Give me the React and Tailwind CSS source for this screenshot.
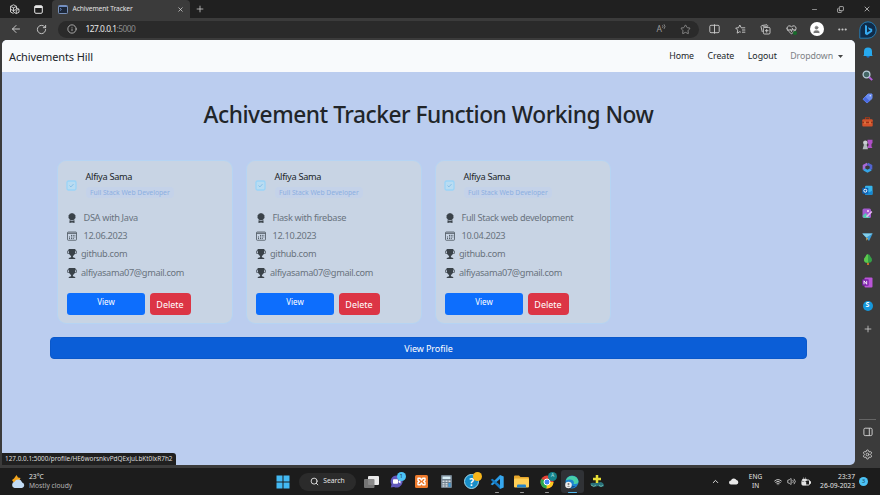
import React from 'react';
import { BsAwardFill, BsTrophyFill } from 'react-icons/bs';
import { ArrowLeft, RotateCw, Info, Star, X, Plus, Minus, Search, Settings, Wifi, Volume2, ChevronUp, Ellipsis, HeartPulse, Copy, User } from 'lucide-react';

const cards = [
  { title: 'DSA with Java', date: '12.06.2023' },
  { title: 'Flask with firebase', date: '12.10.2023' },
  { title: 'Full Stack web development', date: '10.04.2023' },
];

function CalendarIcon() {
  return (
    <svg width="10" height="10" viewBox="0 0 20 20" fill="none" stroke="#4b555e" strokeWidth="1.6">
      <rect x="1" y="2" width="18" height="16.5" rx="1.5" />
      <path d="M1 4.500h18" strokeWidth="2.4" />
      <path d="M8 8.8h2M11.5 8.8h2M15 8.8h1.5M4 12h2M8 12h2M11.5 12h2M15 12h1.5M4 15.2h2M8 15.2h2M11.5 15.2h2" strokeWidth="2" />
    </svg>
  );
}

function Line({ icon, wide, children }) {
  return (
    <div className="flex h-[18.35px] items-center text-[9.2px] tracking-[-0.32px] whitespace-nowrap text-[#68737e]">
      <span className={wide ? 'w-[16.5px] text-[#3a4249]' : 'w-[14px] text-[#3a4249]'}>{icon}</span>
      <span>{children}</span>
    </div>
  );
}

function Card({ title, date }) {
  return (
    <article className="h-[164px] w-[175.5px] rounded-[9px] border border-[#b6d4f3] bg-[#c8d4e4] px-[9px] pt-[9px]">
      <div className="flex h-[39px]">
        <div className="w-[18.5px] pt-[10.5px]">
          <svg className="-ml-px" width="11" height="11" viewBox="0 0 11 11" fill="none">
            <rect x="1" y="1" width="9" height="9" rx="1.5" fill="#b9dcf2" stroke="#9ad4f7" strokeWidth="1.3" />
            <path d="m3.500 5.500 1.400 1.400 2.600-2.800" stroke="#7fb9e4" strokeWidth=".9" />
          </svg>
        </div>
        <div>
          <div className="h-[15px] text-[9.2px] leading-[14px] tracking-[-0.3px] text-[#212529]">Alfiya Sama</div>
          <div className="mt-[2px] h-[11px] rounded bg-[#c4d2e9] px-[4.5px] text-[6.75px] leading-[12px] whitespace-nowrap text-[#8cafe2]">
            Full Stack Web Developer
          </div>
        </div>
      </div>
      <Line wide icon={<BsAwardFill size={10} />}>{title}</Line>
      <Line wide icon={<CalendarIcon />}>{date}</Line>
      <Line icon={<BsTrophyFill size={10} />}>github.com</Line>
      <Line icon={<BsTrophyFill size={10} />}>alfiyasama07@gmail.com</Line>
      <div className="mt-[11px] flex gap-[4.5px] text-white">
        <button className="h-[22px] w-[78px] rounded-[3px] bg-[#0d6efd] pb-[3px] text-[8px]">View</button>
        <button className="h-[22px] w-[41px] rounded-[4px] bg-[#dc3545] pt-[1px] text-[9px]">Delete</button>
      </div>
    </article>
  );
}

function Slot({ children }) {
  return <div className="flex h-[23px] w-full shrink-0 items-center justify-center">{children}</div>;
}

function SideBar() {
  return (
    <aside className="flex w-[25px] flex-col items-center bg-[#3b3b3b] text-[#c9c9c9]">
      <Slot>
        <svg width="18" height="18" viewBox="0 0 18 18">
          <path d="M.8 17.2V9A8.2 8.2 0 1 1 9 17.2Z" fill="#102c49" stroke="#247db5" />
          <path d="M6 4l2 .8v6.6l3.7-2-1.8-.8-1-2.3 4.3 1.8v2.5L8 14.2 6 13Z" fill="#35a9ef" />
        </svg>
      </Slot>
      <Slot>
        <svg width="10" height="11" viewBox="0 0 10 11">
          <path d="M1 8V4.5a4 4 0 0 1 8 0V8l.8.9H.2Z" fill="#27a9ee" /><path d="M3.3 9h3.4a1.7 1.7 0 0 1-3.4 0" fill="#1674c9" />
        </svg>
      </Slot>
      <Slot>
        <svg width="11" height="11" viewBox="0 0 11 11" fill="none">
          <circle cx="4.5" cy="4.5" r="3.4" fill="#466" stroke="#b8cbd9" strokeWidth="1.3" /><path d="m7.2 7.2 3 3" stroke="#b45fdb" strokeWidth="1.9" />
        </svg>
      </Slot>
      <Slot>
        <svg width="11" height="11" viewBox="0 0 11 11">
          <path d="M6 1h4v4.5L5 10 1 6.2Z" fill="#6a8cf0" stroke="#6a8cf0" strokeLinejoin="round" /><path d="m1 6.2 4 3.8 2.5-2.2L3.4 3.7Z" fill="#4a6be0" /><circle cx="8.3" cy="2.7" r=".7" fill="#e0eaff" />
        </svg>
      </Slot>
      <Slot>
        <svg width="11" height="10" viewBox="0 0 11 10">
          <path d="M3.5 2.5V.8h4v1.7" fill="none" stroke="#a93a19" strokeWidth="1.1" /><rect x=".3" y="2.2" width="10.4" height="7.3" rx="1" fill="#d4532b" /><path d="M.3 5.3h10.4" stroke="#8e2b12" /><path d="M3 4.5v2M8 4.5v2" stroke="#ffb56b" />
        </svg>
      </Slot>
      <Slot>
        <svg width="11" height="11" viewBox="0 0 11 11">
          <path d="M5.500 .8h5v3.200l-1 1v2.500l1 1.500h-5V7.500l1-1V5l-1-1Z" fill="#b04fc8" /><circle cx="3.3" cy="3.8" r="2.2" fill="#c9cfd2" /><path d="M2.2 5h2.200L6 10.200H.6Z" fill="#b3bbc0" />
        </svg>
      </Slot>
      <Slot>
        <svg width="11" height="11" viewBox="0 0 11 11" fill="none" strokeWidth="2.6">
          <path d="M5.5 1.8 2 3.7v4" stroke="#a66ad9" /><path d="M2 7.3 5.5 9.2 9 7.3" stroke="#35a4e6" /><path d="M5.5 1.8 9 3.7v3.8" stroke="#5264d0" />
        </svg>
      </Slot>
      <Slot>
        <svg width="11" height="11" viewBox="0 0 11 11">
          <rect x="3" y=".8" width="7.5" height="9" rx="1" fill="#35b5ee" /><path d="m3 5.5 4 2 3.5-2v4.2H3Z" fill="#1687d2" /><rect x=".3" y="2.7" width="6" height="6" rx=".8" fill="#0e62b5" /><circle cx="3.3" cy="5.7" r="1.5" fill="none" stroke="white" />
        </svg>
      </Slot>
      <Slot>
        <svg width="11" height="11" viewBox="0 0 11 11">
          <rect x=".5" y=".5" width="8.5" height="9.5" rx="1.5" fill="#a35bd0" /><path d="m.5 8 3-3L8 10H2Z" fill="#52cbad" /><circle cx="6" cy="3" r="1" fill="#ffe0f6" /><path d="m4.5 8.8 5.3-5.3" stroke="#e6b5f5" strokeWidth="1.7" />
        </svg>
      </Slot>
      <Slot>
        <svg width="11" height="10" viewBox="0 0 11 10">
          <path d="M.3 1.5h10.4L7 9Z" fill="#3c9bd6" /><path d="m.3 1.5 4 4 6.4-4Z" fill="#85cfe9" /><path d="M4.3 5.5v3.3l1.8-2.2Z" fill="#d5b057" />
        </svg>
      </Slot>
      <Slot>
        <svg width="10" height="11" viewBox="0 0 10 11">
          <rect x="4" y="7" width="2" height="4" fill="#c4732d" /><path d="M5 .2q2 0 2.500 2.600Q9.300 4.300 9 6.500 8.500 8.800 6 8.800H4Q1.500 8.800 1 6.500.7 4.300 2.500 2.800 3 .2 5 .2" fill="#35a047" /><path d="M5 .2v8.600H4Q1.500 8.800 1 6.500.7 4.300 2.500 2.800 3 .2 5 .2" fill="#5cc94d" />
        </svg>
      </Slot>
      <Slot>
        <svg width="11" height="11" viewBox="0 0 11 11">
          <rect x="2.5" y=".5" width="8" height="10" rx="1" fill="#ba55d8" /><rect x=".2" y="2.3" width="6.5" height="6.5" rx=".7" fill="#7a20a8" /><path d="M2 7.3V3.8l2.7 3.5V3.8" fill="none" stroke="white" strokeWidth=".9" />
        </svg>
      </Slot>
      <Slot>
        <div className="flex size-[10px] items-center justify-center rounded-full bg-[#1698dc] text-[7px] font-bold text-white">S</div>
      </Slot>
      <Slot><Plus size={10} strokeWidth={2} /></Slot>
      <div className="mt-auto h-px w-[17px] bg-[#656565]" />
      <Slot>
        <svg width="10" height="10" viewBox="0 0 10 10" fill="none" stroke="currentColor">
          <rect x=".9" y="1.2" width="8.2" height="7.4" rx="1.3" /><path d="M6.3 1v8" />
        </svg>
      </Slot>
      <div className="h-[25px] pt-[6px]"><Settings size={11} strokeWidth={2} /></div>
    </aside>
  );
}

function ToolIcon({ children }) {
  return <div className="flex w-[25.5px] items-center justify-center">{children}</div>;
}

function Browser() {
  return (
    <>
      <div className="flex h-[18px] bg-[#202020] text-[#d5d5d5]">
        <div className="flex w-[52px] items-center gap-[14px] pl-[9px]">
          <svg width="11" height="11" viewBox="0 0 11 11" fill="none" stroke="currentColor" strokeWidth=".9">
            <path d="m4.5.8 3 1.5v3l-3 1.4-3-1.4v-3Zm-3 1.6 3 1.4 3-1.4M4.5 3.8v3M7.5 3.8l2.5 1.4v3L7.3 9.6 4.5 8V6.5M1.5 5v3l3 1.5M7.3 9.6V6.4L10 5.2" />
          </svg>
          <svg width="9" height="9" viewBox="0 0 9 9" fill="none" stroke="#e5e5e5">
            <rect x=".7" y=".7" width="7.6" height="7.6" rx="1.2" /><path d="M.7 2h7.6" strokeWidth="2" />
          </svg>
        </div>
        <div className="flex w-[138px] items-center rounded-t-[4px] bg-[#3b3b3b] px-[6px]">
          <svg width="10" height="9" viewBox="0 0 10 9">
            <rect x=".5" y=".5" width="9" height="8" rx=".8" fill="#1c2739" stroke="#7890b8" /><path d="M1 1.4h8" stroke="#789bd8" /><path d="m2 3.2 1.4 1.2L2 5.6" fill="none" stroke="#789bd8" strokeWidth=".8" />
          </svg>
          <span className="ml-[4.5px] flex-1 text-[6.7px] tracking-[-0.1px] text-[#e2e2e2]">Achivement Tracker</span>
          <X size={7} strokeWidth={2.5} />
        </div>
        <div className="flex flex-1 items-center pl-[5px]"><Plus size={10} strokeWidth={1.8} /></div>
        <div className="flex w-[69px] items-center justify-between pr-[9px]">
          <Minus size={7} strokeWidth={2} />
          <Copy size={7} strokeWidth={2.4} className="-scale-y-100" />
          <X size={8} strokeWidth={2.2} />
        </div>
      </div>
      <div className="flex h-[450px]">
        <div className="w-[855px] bg-[#3b3b3b]">
          <div className="flex h-[22px] items-center text-[#cfcfcf]">
            <div className="flex w-[58px] items-center gap-[14px] pl-[10px]">
              <ArrowLeft size={12} strokeWidth={1.9} /><RotateCw size={11} strokeWidth={2} />
            </div>
            <div className="flex h-[17px] w-[641px] items-center rounded-full bg-[#2a2a2a] pr-[8px] pl-[9px]">
              <Info size={10} strokeWidth={1.8} />
              <span className="ml-[8.5px] flex-1 text-[8.4px] tracking-[-0.5px] text-[#e8e8e8]">127.0.0.1<span className="text-[#8b8b8b]">:5000</span></span>
              <div className="mr-[14px] flex text-[#9a9a9a]">
                <span className="text-[8.5px] leading-[10px]">A</span>
                <svg width="4" height="6" viewBox="0 0 4 6" fill="none" stroke="currentColor" strokeWidth=".8"><path d="M.5 1.3q1 1.2 0 2.5M2 .3q2 2.2 0 4.6" /></svg>
              </div>
              <Star size={11} strokeWidth={1.7} className="text-[#9a9a9a]" />
            </div>
            <div className="flex pl-[3px]">
              <ToolIcon>
                <svg width="11" height="10" viewBox="0 0 11 10" fill="none" stroke="currentColor" strokeWidth=".9"><path d="M4 1.3H2A1.2 1.2 0 0 0 .8 2.5v5A1.2 1.2 0 0 0 2 8.7h2M7 1.3h2a1.2 1.2 0 0 1 1.2 1.2v5A1.2 1.2 0 0 1 9 8.7H7M4 1.3h3M4 8.7h3M5.5.3v9.4" /></svg>
              </ToolIcon>
              <ToolIcon>
                <svg width="11" height="11" viewBox="0 0 11 11" fill="none" stroke="currentColor" strokeWidth=".9" strokeLinejoin="round"><path d="M6.2 3.7 4.8 1 3.5 3.7l-2.8.4 2 2-.5 3 2.6-1.4 1 .5M6.2 3.8h4M7 6h3.3M7 8.2h3.3" /></svg>
              </ToolIcon>
              <ToolIcon>
                <svg width="11" height="11" viewBox="0 0 11 11" fill="none" stroke="currentColor" strokeWidth=".9"><rect x="3.4" y="3.4" width="6.6" height="6.6" rx="1.2" /><path d="M2.3 8 1 2.7 1.8 1.5 7 .8l1 1M6.7 5v3.5M5 6.7h3.5M2.8 2.8h5" /></svg>
              </ToolIcon>
              <ToolIcon>
                <span className="relative"><HeartPulse size={11} strokeWidth={2} /><span className="absolute right-0 bottom-0 size-[4px] rounded-full bg-[#176b2b]" /></span>
              </ToolIcon>
              <ToolIcon>
                <div className="flex size-[14px] items-center justify-center rounded-full bg-white text-[#777]"><User size={9} fill="currentColor" strokeWidth={1.5} /></div>
              </ToolIcon>
              <ToolIcon><Ellipsis size={11} strokeWidth={2.6} /></ToolIcon>
            </div>
          </div>
          <Page />
        </div>
        <SideBar />
      </div>
    </>
  );
}

function Page() {
  return (
    <main className="relative ml-[2px] h-[425px] overflow-hidden rounded-t-[5px] rounded-br-[5px] bg-[#bbcdef]">
      <nav className="flex h-[32px] items-center bg-[#f8fafc] pt-[2px] pr-[12px] pl-[7px] text-[#212529]">
        <span className="flex-1 text-[11px] tracking-[-0.12px]">Achivements Hill</span>
        <div className="flex items-center gap-[13.5px] text-[8.8px] tracking-[-0.05px]">
          <span>Home</span><span>Create</span><span>Logout</span>
          <span className="flex items-center gap-[5px] text-[#7d8185]"><span className="tracking-[-0.1px]">Dropdown</span><svg className="-mt-[2px]" width="5" height="3" viewBox="0 0 5 3"><path d="M0 0h5L2.5 3Z" fill="#444" /></svg></span>
        </div>
      </nav>
      <h1 className="pt-[27px] text-center text-[22.7px] leading-[31px] font-medium tracking-[-0.46px] text-[#212529]">Achivement Tracker Function Working Now</h1>
      <section className="mt-[29.5px] ml-[55px] flex gap-[13.5px]">
        {cards.map((c) => <Card key={c.title} {...c} />)}
      </section>
      <button className="mt-[13.5px] ml-[48px] block h-[22px] w-[757px] rounded-[4px] border border-[#0a58ca] bg-[#0b5ed7] pt-[1px] text-[9px] leading-[20px] tracking-[-0.08px] text-white">View Profile</button>
      <div className="absolute bottom-0 left-0 h-[12px] w-[174px] rounded-tr-[3px] bg-[#202020] pl-[3px] text-[6.4px] leading-[12px] whitespace-nowrap text-[#dedede]">
        127.0.0.1:5000/profile/HE6worsnkvPdQExjuLbKt0lxR7h2
      </div>
    </main>
  );
}

function TaskApp({ children, running, active }) {
  return (
    <div className="flex w-[25.15px] justify-center">
      <div className={active ? 'relative flex h-[23px] w-[23px] items-center justify-center rounded-[3px] bg-[#303236]' : 'relative flex h-[23px] w-[23px] items-center justify-center'}>
        {children}
        {running && <span className="absolute bottom-0 h-[1.5px] w-[4px] rounded-full bg-[#999]" />}
        {active && <span className="absolute bottom-0 h-[1.5px] w-[9px] rounded-full bg-[#55b9f0]" />}
      </div>
    </div>
  );
}

function TaskBar() {
  return (
    <footer className="flex h-[27px] items-center bg-[#1c1c1c] text-[#e6e6e6]">
      <div className="flex w-[276px] items-center gap-[4px] pl-[11px]">
        <svg width="14" height="14" viewBox="0 0 14 14">
          <path d="M5.5 0 7 2.5 9.5 3 8 7l-5 1L1 5l2-1.5Z" fill="#f4a51c" /><path d="M3.5 13a3.2 3.2 0 0 1 0-6.2 4.2 4.2 0 0 1 7.7.6 2.9 2.9 0 0 1-.2 5.6Z" fill="#c3dcf5" />
        </svg>
        <div className="-mt-[1px] text-[6.7px] leading-[9px]"><div>23°C</div><div className="text-[#b5b5b5]">Mostly cloudy</div></div>
      </div>
      <svg width="14" height="14" viewBox="0 0 14 14"><path d="M.5.5h6v6h-6ZM7.5.5h6v6h-6ZM.5 7.5h6v6h-6ZM7.5 7.5h6v6h-6Z" fill="#42b9f3" /></svg>
      <div className="ml-[9px] flex h-[18px] w-[57px] items-center justify-center gap-[4px] rounded-full bg-[#2b2b2b] text-[6.8px]">
        <Search size={9} strokeWidth={2.4} />Search
      </div>
      <div className="ml-[2.5px] flex">
        <TaskApp>
          <svg width="15" height="12" viewBox="0 0 15 12"><rect x="4" y="0" width="11" height="9" rx="1" fill="#e9e9e9" /><rect x="0" y="3" width="10.5" height="9" rx="1" fill="#808080" fillOpacity=".9" /></svg>
        </TaskApp>
        <TaskApp>
          <svg width="13" height="13" viewBox="0 0 13 13"><path d="M6.5.5a6 6 0 1 1-2.5 11.4L.8 12.6l.7-3A6 6 0 0 1 6.500.5" fill="#6259bd" /><rect x="3" y="4.3" width="5" height="4.5" rx=".8" fill="white" /><path d="m8.5 6 2-1.2v3.6l-2-1.2Z" fill="white" /></svg>
          <span className="absolute top-[1.5px] right-[2px] flex size-[9px] items-center justify-center rounded-full bg-[#4cc2f5] text-[6px] text-[#15374a]">1</span>
        </TaskApp>
        <TaskApp>
          <svg width="13" height="13" viewBox="0 0 13 13"><rect width="13" height="13" rx="1.5" fill="#ed7a2c" /><path d="M3 3.200h2.200L6.500 5 7.800 3.200H10v2.200L8.700 6.500 10 7.600v2.200H7.800L6.500 8 5.200 9.800H3V7.600l1.300-1.100L3 5.400Z" fill="none" stroke="white" strokeWidth="1.400" strokeLinejoin="round" /></svg>
        </TaskApp>
        <TaskApp>
          <svg width="11" height="13" viewBox="0 0 11 13"><rect width="11" height="13" rx="1" fill="#72818e" /><rect x="1.500" y="1.500" width="8" height="2.500" fill="#d7edf5" /><path d="M1.500 5.500h2v1.500h-2zM4.500 5.500h2v1.500h-2zM7.500 5.500h2v1.500h-2zM1.500 8h2v1.500h-2zM4.500 8h2v1.500h-2zM1.500 10.300h2v1.500h-2zM4.500 10.300h2v1.500h-2z" fill="#d4dde4" /><path d="M7.500 8h2v3.800h-2z" fill="#3c9cdf" /></svg>
        </TaskApp>
        <TaskApp>
          <div className="flex size-[15px] items-center justify-center rounded-full border border-[#a1dcf1] bg-[#178ec8] text-[10px] leading-none font-bold text-white">?</div>
          <span className="absolute top-[1.5px] right-[1.5px] size-[9px] rounded-full bg-[#f8b71c]" />
        </TaskApp>
        <TaskApp running>
          <svg width="14" height="14" viewBox="0 0 14 14"><path d="M10 0v4L2.500 10.200.7 9.200Z" fill="#2a9ce6" /><path d="M10 14v-4L2.500 3.800.7 4.800Z" fill="#157ac3" /><path d="m10 0 3.700 1.500v11L10 14Z" fill="#36a8ef" /></svg>
        </TaskApp>
        <TaskApp running>
          <svg width="15" height="13" viewBox="0 0 15 13"><path d="M0 1.500Q0 .5 1 .5h4l1.500 1.500H14q1 0 1 1v4H0Z" fill="#e7a62b" /><rect y="3.500" width="15" height="9" rx="1" fill="#ffcf57" /><path d="M3 12.500v-2q0-1 1-1h7q1 0 1 1v2Z" fill="#2383ca" /></svg>
        </TaskApp>
        <TaskApp running>
          <svg width="14" height="14" viewBox="0 0 14 14"><circle cx="7" cy="7" r="6.500" fill="#e44236" /><path d="M7 7 1.400 3.700A6.500 6.500 0 0 0 7 13.500Z" fill="#2da94f" /><path d="M7 7h6.500A6.500 6.500 0 0 1 6.500 13.500Z" fill="#fdc91d" /><circle cx="7" cy="7" r="3" fill="#4285f4" stroke="white" /></svg>
          <span className="absolute top-[1.5px] right-[1.5px] flex size-[9px] items-center justify-center rounded-full bg-[#16838b] text-[5px] text-[#b8e5e7]">A</span>
        </TaskApp>
        <TaskApp active>
          <svg width="14" height="14" viewBox="0 0 14 14"><circle cx="7" cy="7" r="6.500" fill="#1c83d0" /><path d="M.8 5.500A6.500 6.500 0 0 1 13.500 7q-.5 2.500-4.500 2-1-.5 0-2Q7 3 .8 5.500" fill="#47cfaa" /><path d="M5.500 7q-1 4 5 4.300Q7 14 3 12.300 1 8 5.500 7" fill="#124c8c" /><circle cx="3.500" cy="10" r="3.300" fill="#eee" /><circle cx="3.500" cy="9" r="1" fill="#777" /><path d="M2 11.700q1.500-2 3 0" fill="#777" /></svg>
        </TaskApp>
        <TaskApp>
          <svg width="14" height="13" viewBox="0 0 14 13"><path d="M0 9q2-2 5-1l6-1q3 1 3 4-3 2-6 0-5 2-8-2" fill="#28717a" /><path d="M7 0v8M3 4h8" stroke="#e8df37" strokeWidth="2.500" /><path d="M1 10q3 3 5 0M9 10q2 3 4 0" fill="none" stroke="#69b0a4" /></svg>
        </TaskApp>
      </div>
      <div className="ml-auto flex items-center">
        <ChevronUp size={9} strokeWidth={2.5} />
        <svg className="ml-[9px]" width="10" height="7" viewBox="0 0 10 7"><path d="M2 6.500A2 2 0 0 1 2 2.500 3 3 0 0 1 7.500 2a2.300 2.300 0 0 1 0 4.500Z" fill="#e9e9e9" /></svg>
        <div className="-mt-[1px] ml-[9px] w-[15px] text-center text-[6.500px] leading-[9px]">ENG<br />IN</div>
        <Wifi className="ml-[11px]" size={8} strokeWidth={2.500} />
        <Volume2 className="ml-[4.5px]" size={9} strokeWidth={2} />
        <svg className="ml-[5px]" width="10" height="9" viewBox="0 0 10 9"><rect x="1" y="3" width="7.500" height="5" rx="1" fill="none" stroke="#e5e5e5" /><path d="M1 5h4v3H1ZM9 4.500h1v2H9ZM2.500.3v2M4.500.3v2M1.500 2h4v1.500l-2 1.500-2-1.500Z" fill="#e5e5e5" stroke="#e5e5e5" strokeWidth=".4" /></svg>
        <div className="-mt-[1px] w-[44.5px] text-right text-[6.700px] leading-[9px] whitespace-nowrap">23:37<br />26-09-2023</div>
        <div className="mr-[12px] ml-[4px] flex size-[9px] items-center justify-center rounded-full bg-[#4cc2f5] text-[6px] text-[#17475f]">3</div>
      </div>
    </footer>
  );
}

export default function App() {
  return (
    <div className="h-[495px] w-[880px] overflow-hidden bg-[#3b3b3b] font-['Noto_Sans','Open_Sans',sans-serif]">
      <Browser />
      <TaskBar />
    </div>
  );
}
